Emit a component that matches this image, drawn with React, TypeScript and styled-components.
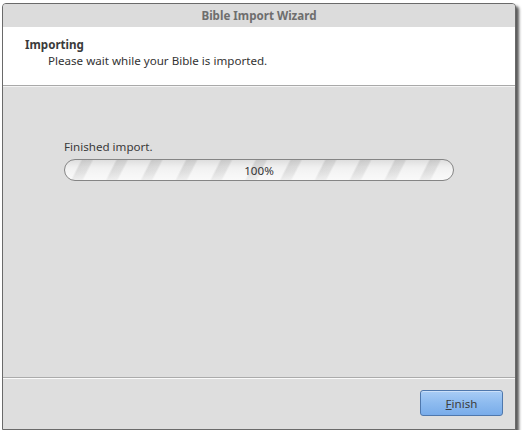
import React from "react";
import styled, { createGlobalStyle } from "styled-components";

const Global = createGlobalStyle`
  html, body { margin: 0; padding: 0; background: #ffffff; }
  body { font-family: "Noto Sans", "Open Sans", "DejaVu Sans", sans-serif; font-size: 11.6px; }
`;

const Screen = styled.div`
  padding: 3px 0 0 2px;
`;

const Window = styled.div`
  width: 512px;
  height: 425px;
  border: 1px solid #6a6a6a;
  border-radius: 4px 4px 0 0;
  background: #dedede;
  box-shadow: 3px 3px 3px rgba(0, 0, 0, 0.65);
  display: flex;
  flex-direction: column;
  overflow: hidden;
`;

const TitleBar = styled.div`
  height: 23px;
  flex-shrink: 0;
  background: #dcdcdc;
  display: flex;
  align-items: center;
  justify-content: center;
  font-weight: 700;
  font-size: 11.6px;
  color: #6e6e6e;
`;

const Header = styled.div`
  height: 59px;
  flex-shrink: 0;
  background: #ffffff;
  border-bottom: 1px solid #a9a9a9;
  box-shadow: 0 1px 0 #f4f4f4;
  padding: 10px 0 0 22px;
  box-sizing: border-box;
  color: #333;
`;

const HeaderTitle = styled.div`
  font-weight: 700;
  font-size: 11.6px;
  line-height: 16px;
  color: #3a3a3a;
`;

const HeaderSub = styled.div`
  padding-left: 23px;
  font-size: 11.6px;
  line-height: 16px;
  color: #333;
`;

const Body = styled.div`
  flex: 1;
  padding: 51px 0 0 61px;
  box-sizing: border-box;
  margin-top: 1px;
`;

const Label = styled.div`
  font-size: 11.6px;
  line-height: 17px;
  color: #3a3a3a;
  margin-bottom: 4px;
`;

const Progress = styled.div`
  width: 388px;
  height: 20px;
  border: 1px solid #858585;
  border-radius: 11px;
  overflow: hidden;
  background:
    linear-gradient(180deg, rgba(0,0,0,0.09) 0%, rgba(0,0,0,0.02) 35%, rgba(255,255,255,0) 55%, rgba(255,255,255,0.5) 100%),
    repeating-linear-gradient(
      -63deg,
      #f4f4f4 0px,
      #f4f4f4 19px,
      #e0e0e0 21px,
      #dcdcdc 29px,
      #f4f4f4 31px
    );
  display: flex;
  align-items: center;
  justify-content: center;
  font-size: 11.6px;
  color: #333;
`;

const Footer = styled.div`
  height: 52px;
  flex-shrink: 0;
  border-top: 1px solid #ababab;
  box-shadow: inset 0 1px 0 #fafafa;
  display: flex;
  justify-content: flex-end;
  align-items: flex-start;
  padding: 12px 12px 0 0;
  box-sizing: border-box;
`;

const Button = styled.button`
  width: 83px;
  height: 26px;
  border: 1px solid #4f78ad;
  border-radius: 3px;
  background: linear-gradient(180deg, #a9cdf5 0%, #8dbbef 50%, #79acea 100%);
  font-family: inherit;
  font-size: 11.6px;
  color: #3d3d3d;
  padding: 0;
  box-shadow: inset 0 1px 0 rgba(255,255,255,0.4);
`;

const U = styled.span`
  text-decoration: underline;
`;

export default function App() {
  return (
    <>
      <Global />
      <Screen>
        <Window>
          <TitleBar>Bible Import Wizard</TitleBar>
          <Header>
            <HeaderTitle>Importing</HeaderTitle>
            <HeaderSub>Please wait while your Bible is imported.</HeaderSub>
          </Header>
          <Body>
            <Label>Finished import.</Label>
            <Progress>100%</Progress>
          </Body>
          <Footer>
            <Button>
              <U>F</U>inish
            </Button>
          </Footer>
        </Window>
      </Screen>
    </>
  );
}
